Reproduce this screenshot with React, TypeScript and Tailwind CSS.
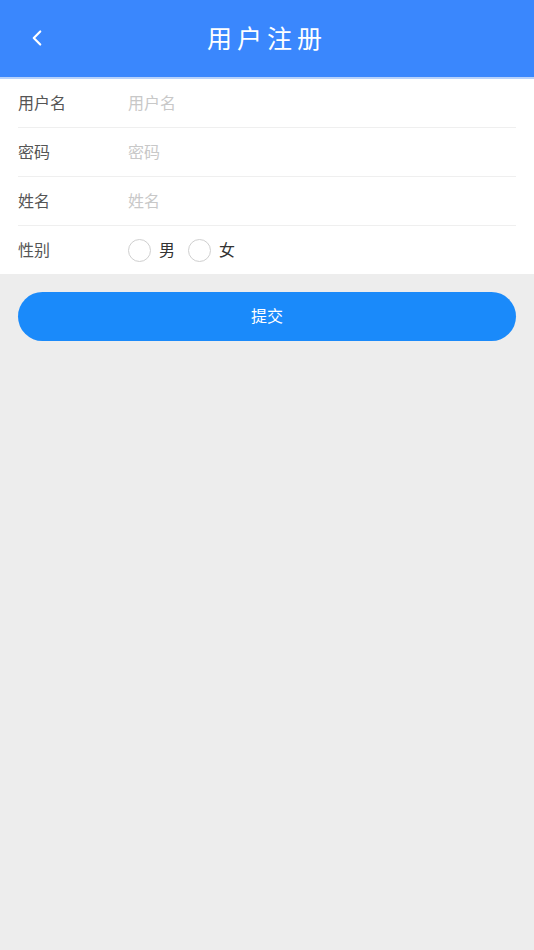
import { ChevronLeft } from 'lucide-react';

const font = { fontFamily: '"Noto Sans CJK SC", "Noto Sans", sans-serif' };

const fields = [
  { label: '用户名', placeholder: '用户名' },
  { label: '密码', placeholder: '密码' },
  { label: '姓名', placeholder: '姓名' },
];

function Radio({ label }: { label: string }) {
  return (
    <label className="flex items-center gap-[8px]">
      <span className="w-[23px] h-[23px] rounded-full border border-[#cfcfcf] bg-white" />
      <span className="text-[16px] text-[#333] pb-[2px]">{label}</span>
    </label>
  );
}

export default function App() {
  return (
    <div className="min-h-[950px] bg-[#ededed] flex flex-col" style={font}>
      {/* Header */}
      <div className="h-[77px] bg-[#3a87fd] flex items-center relative">
        <button className="absolute left-[24px] top-[25px] text-white">
          <ChevronLeft className="w-[26px] h-[26px]" strokeWidth={2} />
        </button>
        <h1 className="flex-1 text-center text-white text-[25px] tracking-[5px] pb-[2px]">用户注册</h1>
      </div>
      <div className="h-[2px] bg-[#b7d2fb]" />

      {/* Form */}
      <div className="bg-white px-[18px]">
        {fields.map((f) => (
          <div key={f.label} className="h-[49px] flex items-center border-b border-[#efefef] pb-[2px]">
            <span className="w-[110px] text-[16px] text-[#555]">{f.label}</span>
            <input
              className="flex-1 text-[16px] text-[#333] placeholder-[#c8c8c8] outline-none bg-transparent"
              placeholder={f.placeholder}
            />
          </div>
        ))}
        <div className="h-[48px] flex items-center">
          <span className="w-[110px] text-[16px] text-[#555] pb-[2px]">性别</span>
          <div className="flex items-center gap-[13px]">
            <Radio label="男" />
            <Radio label="女" />
          </div>
        </div>
      </div>

      {/* Submit */}
      <div className="px-[18px] pt-[18px]">
        <button className="w-full h-[49px] rounded-full bg-[#1a8afa] text-white text-[16px] pb-[3px]">提交</button>
      </div>
    </div>
  );
}
